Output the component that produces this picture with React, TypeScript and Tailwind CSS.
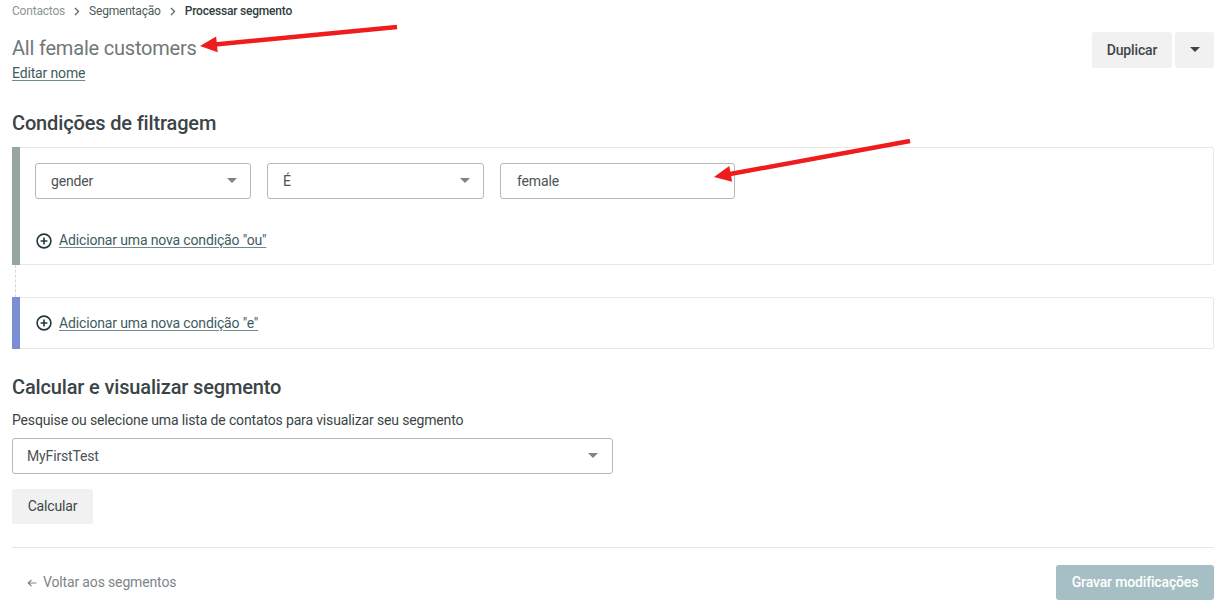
import React from "react";

const Caret = () => (
  <svg width="10" height="6" viewBox="0 0 10 6" className="shrink-0">
    <path d="M0 0 L10 0 L5 5 Z" fill="#7a8385" />
  </svg>
);

const PlusCircle = () => (
  <svg width="16" height="16" viewBox="0 0 16 16" className="shrink-0">
    <circle cx="8" cy="8" r="6.9" fill="none" stroke="#23393c" strokeWidth="1.6" />
    <path d="M8 4.6 V11.4 M4.6 8 H11.4" stroke="#23393c" strokeWidth="1.6" />
  </svg>
);

const Chevron = () => (
  <svg width="6" height="9" viewBox="0 0 6 9" className="shrink-0">
    <path d="M1 1 L4.5 4.5 L1 8" fill="none" stroke="#5d6769" strokeWidth="1.3" />
  </svg>
);

function Arrow({ x1, y1, x2, y2 }: { x1: number; y1: number; x2: number; y2: number }) {
  const dx = x2 - x1;
  const dy = y2 - y1;
  const len = Math.sqrt(dx * dx + dy * dy);
  const ux = dx / len;
  const uy = dy / len;
  const hl = 17;
  const hw = 8;
  const bx = x2 - ux * hl;
  const by = y2 - uy * hl;
  const px = -uy;
  const py = ux;
  return (
    <g>
      <line x1={x1} y1={y1} x2={bx + ux * 2} y2={by + uy * 2} stroke="#ee1c1c" strokeWidth="4.5" />
      <polygon
        points={`${x2},${y2} ${bx + px * hw},${by + py * hw} ${bx - px * hw},${by - py * hw}`}
        fill="#ee1c1c"
      />
    </g>
  );
}

export default function App() {
  return (
    <div
      className="relative w-[1226px] h-[607px] bg-white overflow-hidden px-3 tracking-[-0.15px]"
      style={{ fontFamily: "Roboto, 'Liberation Sans', sans-serif" }}
    >
      {/* Breadcrumb */}
      <div className="flex items-center pt-[2px] h-[20px] text-[12px] tracking-[-0.2px]">
        <span className="text-[#8c9496]">Contactos</span>
        <span className="mx-[9px]"><Chevron /></span>
        <span className="text-[#4d5b5d]">Segmentação</span>
        <span className="mx-[9px]"><Chevron /></span>
        <span className="text-[#2f3d3f] font-medium">Processar segmento</span>
      </div>

      {/* Header */}
      <div className="flex justify-between items-start">
        <div className="flex flex-col">
          <h1 className="text-[20px] leading-[28px] mt-[14px] text-[#6f7779] font-normal tracking-[-0.2px]">All female customers</h1>
          <a className="text-[14px] leading-[18px] mt-[2px] text-[#3e5c60] underline underline-offset-2 decoration-[#6f8a8e]">Editar nome</a>
        </div>
        <div className="flex gap-[3px] mt-[12px]">
          <button className="h-[36px] w-[80px] bg-[#f1f1f1] rounded-[3px] text-[14px] font-medium text-[#3f4547]">Duplicar</button>
          <button className="h-[36px] w-[39px] bg-[#f1f1f1] rounded-[3px] flex items-center justify-center">
            <svg width="10" height="6" viewBox="0 0 10 6">
              <path d="M0 0 L10 0 L5 5 Z" fill="#3f4547" />
            </svg>
          </button>
        </div>
      </div>

      {/* Filter conditions */}
      <h2 className="text-[20px] leading-[28px] mt-[27px] text-[#3b4446] font-medium">Condições de filtragem</h2>

      <div className="mt-[10px] flex border border-[#e8e9e9] rounded-[2px] h-[118px]">
        <div className="w-[8px] bg-[#97a6a4] -my-px -ml-px" />
        <div className="flex-1 pl-[15px] pt-[15px]">
          <div className="flex gap-[16px]">
            <div className="w-[216px] h-[36px] border border-[#b3b8ba] rounded-[3px] flex items-center justify-between pl-[15px] pr-[13px] text-[14px] text-[#4b5355]">
              <span>gender</span>
              <Caret />
            </div>
            <div className="w-[217px] h-[36px] border border-[#b3b8ba] rounded-[3px] flex items-center justify-between pl-[15px] pr-[13px] text-[14px] text-[#4b5355]">
              <span>É</span>
              <Caret />
            </div>
            <div className="w-[235px] h-[36px] border border-[#b3b8ba] rounded-[3px] flex items-center pl-[16px] text-[14px] text-[#4b5355]">
              <span>female</span>
            </div>
          </div>
          <div className="flex items-center gap-[7px] mt-[31px] ml-px">
            <PlusCircle />
            <a className="text-[14px] text-[#3e5c60] underline underline-offset-2 decoration-[#6f8a8e]">Adicionar uma nova condição "ou"</a>
          </div>
        </div>
      </div>

      {/* dashed connector */}
      <div className="h-[32px] ml-[3px] border-l border-dashed border-[#d4d7d8]" />

      <div className="flex border border-[#e8e9e9] rounded-[2px] h-[52px]">
        <div className="w-[8px] bg-[#7b8ed4] -my-px -ml-px" />
        <div className="flex-1 pl-[16px] flex items-center">
          <div className="flex items-center gap-[7px]">
            <PlusCircle />
            <a className="text-[14px] text-[#3e5c60] underline underline-offset-2 decoration-[#6f8a8e]">Adicionar uma nova condição "e"</a>
          </div>
        </div>
      </div>

      {/* Calculate */}
      <h2 className="text-[20px] leading-[28px] mt-[24px] text-[#3b4446] font-medium">Calcular e visualizar segmento</h2>
      <p className="text-[14px] leading-[18px] mt-[10px] text-[#3b4446]">Pesquise ou selecione uma lista de contatos para visualizar seu segmento</p>
      <div className="mt-[9px] w-[601px] h-[36px] border border-[#b3b8ba] rounded-[3px] flex items-center justify-between pl-[14px] pr-[14px] text-[14px] text-[#4b5355]">
        <span>MyFirstTest</span>
        <Caret />
      </div>
      <button className="mt-[15px] h-[35px] w-[81px] bg-[#f1f1f1] rounded-[3px] text-[14px] text-[#3f4547]">Calcular</button>

      <div className="mt-[23px] border-t border-[#e6e7e7]" />

      {/* Footer */}
      <div className="flex justify-between items-center mt-[17px]">
        <a className="ml-[15px] text-[14px] text-[#7d8587] flex items-center gap-[6px]">
          <svg width="10" height="8" viewBox="0 0 10 8" className="shrink-0">
            <path d="M9.5 4 H1.5 M4.5 1 L1.2 4 L4.5 7" fill="none" stroke="#7d8587" strokeWidth="1.1" />
          </svg>
          <span>Voltar aos segmentos</span>
        </a>
        <button className="h-[35px] w-[158px] bg-[#a6bfc4] rounded-[3px] text-[14px] font-medium text-white">Gravar modificações</button>
      </div>

      {/* Annotation arrows */}
      <svg className="absolute inset-0 pointer-events-none" width="1226" height="607">
        <Arrow x1={397} y1={27} x2={200} y2={46} />
        <Arrow x1={910} y1={141} x2={714} y2={177} />
      </svg>
    </div>
  );
}
